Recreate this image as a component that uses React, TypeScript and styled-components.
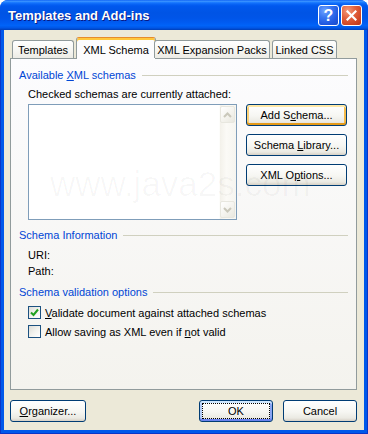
import React from 'react'
import styled, { createGlobalStyle, css } from 'styled-components'

const GlobalStyle = createGlobalStyle`
  html, body {
    margin: 0;
    padding: 0;
    background: #ffffff;
  }
  body {
    font-family: 'Liberation Sans', Arial, sans-serif;
    font-size: 11px;
    color: #000;
  }
  * {
    box-sizing: border-box;
  }
`

const Window = styled.div`
  width: 368px;
  height: 434px;
  display: flex;
  flex-direction: column;
  border-radius: 8px 8px 0 0;
  overflow: hidden;
  background: #0055e8;
`

const TitleBar = styled.div`
  height: 30px;
  flex: none;
  display: flex;
  align-items: center;
  gap: 2px;
  padding: 1px 6px 0 8px;
  background: linear-gradient(
    to bottom,
    #0a5ef4 0%,
    #3d95ff 4%,
    #1d7cff 8%,
    #0a66f7 13%,
    #0058ee 20%,
    #0054e5 42%,
    #0055e8 60%,
    #005bf1 74%,
    #0063f8 85%,
    #0058e8 92%,
    #0049d0 97%,
    #003db0 100%
  );
`

const Title = styled.div`
  flex: 1;
  color: #ffffff;
  font: bold 13px 'Liberation Sans', Arial, sans-serif;
  text-shadow: 1px 1px #0a1883;
  white-space: nowrap;
`

const CaptionButton = styled.div<{ $kind: 'help' | 'close' }>`
  width: 21px;
  height: 21px;
  border: 1px solid #ffffff;
  border-radius: 3px;
  display: flex;
  align-items: center;
  justify-content: center;
  color: #ffffff;
  font: bold 16px 'Liberation Sans', Arial, sans-serif;
  ${({ $kind }) =>
    $kind === 'help'
      ? css`
          background: radial-gradient(circle at 30% 25%, #6fa3ff 0%, #3a78f2 35%, #2058e0 70%, #1a4cc8 100%);
        `
      : css`
          background: radial-gradient(circle at 30% 25%, #f49a7a 0%, #e2613d 40%, #cf4423 75%, #b9341a 100%);
        `}
`

const Frame = styled.div`
  flex: 1;
  display: flex;
  padding: 0 3px 3px;
  border: 1px solid #0a35c8;
  border-top: none;
  background: #0058ea;
`

const Body = styled.div`
  position: relative;
  flex: 1;
  display: flex;
  flex-direction: column;
  background: #ece9d8;
  padding: 7px 7px 8px 6px;
`

const Watermark = styled.div`
  position: absolute;
  left: 46px;
  top: 134px;
  font: 35px 'Liberation Sans', Arial, sans-serif;
  color: rgba(0, 0, 0, 0.03);
  pointer-events: none;
  z-index: 3;
  white-space: nowrap;
`

const TabRow = styled.div`
  position: relative;
  z-index: 2;
  height: 21px;
  display: flex;
  align-items: flex-end;
  padding-left: 2px;
`

const Tab = styled.div<{ $selected?: boolean; $width: number; $gap: number }>`
  width: ${({ $width }) => $width}px;
  margin-left: ${({ $gap }) => $gap}px;
  display: flex;
  justify-content: center;
  align-items: center;
  border: 1px solid #919b9c;
  border-bottom: none;
  border-radius: 3px 3px 0 0;
  white-space: nowrap;
  ${({ $selected }) =>
    $selected
      ? css`
          height: 22px;
          margin-bottom: -1px;
          margin-right: -2px;
          padding-top: 2px;
          border-top: 1px solid #e68b2c;
          box-shadow: inset 0 2px #ffc73c;
          background: #fcfcfe;
        `
      : css`
          height: 18px;
          background: linear-gradient(to bottom, #ffffff 0%, #f7f7f3 50%, #ecebe5 100%);
        `}
`

const Panel = styled.div`
  height: 332px;
  flex: none;
  display: flex;
  flex-direction: column;
  border: 1px solid #919b9c;
  background: linear-gradient(to bottom, #fcfcfe 0%, #f4f3ee 100%);
  padding: 10px 8px 0 8px;
`

const GroupHeader = styled.div<{ $top?: number }>`
  height: 13px;
  margin-top: ${({ $top }) => $top ?? 0}px;
  display: flex;
  align-items: center;
  gap: 6px;
  color: #0046d5;
  line-height: 13px;
  white-space: nowrap;

  &::after {
    content: '';
    flex: 1;
    height: 1px;
    background: #d0d0bf;
  }
`

const Indented = styled.div`
  margin-left: 9px;
  display: flex;
  flex-direction: column;
`

const Line = styled.div<{ $top?: number }>`
  height: 13px;
  line-height: 13px;
  margin-top: ${({ $top }) => $top ?? 0}px;
  white-space: nowrap;
`

const SchemaRow = styled.div`
  display: flex;
  gap: 9px;
  margin-top: 3px;
`

const ListBox = styled.div`
  width: 209px;
  height: 116px;
  border: 1px solid #7f9db9;
  background: #ffffff;
  display: flex;
  justify-content: flex-end;
`

const ScrollBar = styled.div`
  width: 17px;
  display: flex;
  flex-direction: column;
  justify-content: space-between;
  background: linear-gradient(to right, #f3f1ea 0%, #fbfaf6 40%, #f6f5f0 100%);
  border-left: 1px solid #fdfdfb;
`

const ScrollButton = styled.div`
  height: 17px;
  margin: 1px 1px 1px 0;
  border: 1px solid #e8e7df;
  border-radius: 2px;
  background: linear-gradient(135deg, #ffffff 0%, #f3f2ec 60%, #e9e8e0 100%);
  display: flex;
  align-items: center;
  justify-content: center;
`

const ButtonColumn = styled.div`
  display: flex;
  flex-direction: column;
  gap: 8px;
`

const Button = styled.button<{ $width: number; $state?: 'hot' | 'default' }>`
  width: ${({ $width }) => $width}px;
  height: 22px;
  padding: 2px;
  display: flex;
  border: 1px solid #003c74;
  border-radius: 3px;
  background: linear-gradient(to bottom, #ffffff 0%, #f6f6f2 55%, #ebeae3 85%, #d6d0c5 100%);
  font: 11px 'Liberation Sans', Arial, sans-serif;
  color: #000000;
  ${({ $state }) =>
    $state === 'hot' &&
    css`
      box-shadow: inset 0 2px #ffe8a6, inset 0 -2px #e59a18, inset 2px 0 #fbd17a, inset -2px 0 #f5bb4c;
    `}
  ${({ $state }) =>
    $state === 'default' &&
    css`
      box-shadow: inset 0 2px #cee7ff, inset 0 -2px #6982ee, inset 2px 0 #b4cdf8, inset -2px 0 #8aa5f2;
    `}
`

const ButtonLabel = styled.span<{ $focus?: boolean }>`
  flex: 1;
  display: block;
  text-align: center;
  line-height: 14px;
  border: 1px dotted ${({ $focus }) => ($focus ? '#000000' : 'transparent')};
  white-space: nowrap;
`

const CheckRow = styled.div<{ $top: number }>`
  height: 13px;
  margin-top: ${({ $top }) => $top}px;
  display: flex;
  align-items: center;
  gap: 4px;
  white-space: nowrap;
`

const CheckBox = styled.div`
  width: 13px;
  height: 13px;
  flex: none;
  border: 1px solid #1c5180;
  background: linear-gradient(135deg, #dcdcd7 0%, #f2f2ee 50%, #ffffff 100%);
  display: flex;
  align-items: center;
  justify-content: center;
`

const ButtonBar = styled.div`
  margin-top: 10px;
  display: flex;
  justify-content: space-between;
`

const RightButtons = styled.div`
  display: flex;
  gap: 10px;
`

const Chevron = ({ up }: { up?: boolean }) => (
  <svg width="9" height="6" viewBox="0 0 9 6">
    <polyline
      points={up ? '1,5 4.5,1.5 8,5' : '1,1 4.5,4.5 8,1'}
      fill="none"
      stroke="#cac8bb"
      strokeWidth="2"
    />
  </svg>
)

export default function App() {
  return (
    <>
      <GlobalStyle />
      <Window>
        <TitleBar>
          <Title>Templates and Add-ins</Title>
          <CaptionButton $kind="help">?</CaptionButton>
          <CaptionButton $kind="close">
            <svg width="11" height="11" viewBox="0 0 11 11">
              <path d="M1.5 1.5 L9.5 9.5 M9.5 1.5 L1.5 9.5" stroke="#ffffff" strokeWidth="2.2" strokeLinecap="square" />
            </svg>
          </CaptionButton>
        </TitleBar>
        <Frame>
          <Body>
            <TabRow>
              <Tab $width={62} $gap={0}>Templates</Tab>
              <Tab $width={80} $gap={2} $selected>XML Schema</Tab>
              <Tab $width={116} $gap={0}>XML Expansion Packs</Tab>
              <Tab $width={65} $gap={2}>Linked CSS</Tab>
            </TabRow>
            <Panel>
              <GroupHeader>
                <span>Available <u>X</u>ML schemas</span>
              </GroupHeader>
              <Indented>
                <Line $top={6}>Checked schemas are currently attached:</Line>
                <SchemaRow>
                  <ListBox>
                    <ScrollBar>
                      <ScrollButton>
                        <Chevron up />
                      </ScrollButton>
                      <ScrollButton>
                        <Chevron />
                      </ScrollButton>
                    </ScrollBar>
                  </ListBox>
                  <ButtonColumn>
                    <Button $width={101} $state="hot">
                      <ButtonLabel>Add S<u>c</u>hema...</ButtonLabel>
                    </Button>
                    <Button $width={101}>
                      <ButtonLabel>Schema <u>L</u>ibrary...</ButtonLabel>
                    </Button>
                    <Button $width={101}>
                      <ButtonLabel>XML O<u>p</u>tions...</ButtonLabel>
                    </Button>
                  </ButtonColumn>
                </SchemaRow>
              </Indented>

              <GroupHeader $top={9}>
                <span>Schema Information</span>
              </GroupHeader>
              <Indented>
                <Line $top={7}>URI:</Line>
                <Line $top={3}>Path:</Line>
              </Indented>

              <GroupHeader $top={8}>
                <span>Schema validation options</span>
              </GroupHeader>
              <Indented>
                <CheckRow $top={7}>
                  <CheckBox>
                    <svg width="9" height="9" viewBox="0 0 9 9">
                      <polyline points="1,4.5 3.5,7 8,1.5" fill="none" stroke="#21a121" strokeWidth="2" />
                    </svg>
                  </CheckBox>
                  <span><u>V</u>alidate document against attached schemas</span>
                </CheckRow>
                <CheckRow $top={6}>
                  <CheckBox />
                  <span>Allow saving as XML even if <u>n</u>ot valid</span>
                </CheckRow>
              </Indented>
            </Panel>

            <ButtonBar>
              <Button $width={76}>
                <ButtonLabel><u>O</u>rganizer...</ButtonLabel>
              </Button>
              <RightButtons>
                <Button $width={74} $state="default">
                  <ButtonLabel $focus>OK</ButtonLabel>
                </Button>
                <Button $width={74}>
                  <ButtonLabel>Cancel</ButtonLabel>
                </Button>
              </RightButtons>
            </ButtonBar>
            <Watermark>www.java2s.com</Watermark>
          </Body>
        </Frame>
      </Window>
    </>
  )
}
